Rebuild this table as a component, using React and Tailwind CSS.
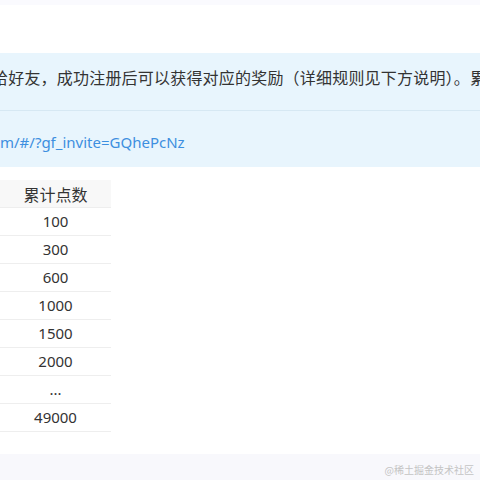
export default function App() {
  const rows = ["100", "300", "600", "1000", "1500", "2000", "...", "49000"];
  return (
    <div
      className="w-[480px] h-[480px] bg-white flex flex-col overflow-hidden text-[#333]"
      style={{ fontFamily: '"Noto Sans", "Noto Sans CJK SC", sans-serif' }}
    >
      <div className="h-[5px] bg-[#fafafe] shrink-0" />
      <div className="h-[48px] shrink-0" />
      <div className="bg-[#e8f5fd] shrink-0">
        <div className="h-[58px] border-b border-[#d6e8f3] pt-[12px] overflow-hidden">
          <p className="whitespace-nowrap -ml-[8px] text-[16px] leading-[24px] tracking-[0.2px] text-[#333]" style={{ fontFamily: '"Noto Sans CJK SC", sans-serif' }}>
            给好友，成功注册后可以获得对应的奖励（详细规则见下方说明）。累计邀请
          </p>
        </div>
        <div className="h-[56px] pt-[19px] overflow-hidden">
          <p className="whitespace-nowrap text-[15px] leading-[24px] text-[#3d8fe0]" style={{ fontFamily: '"Noto Sans", sans-serif' }}>
            m/#/?gf_invite=GQhePcNz
          </p>
        </div>
      </div>
      <div className="h-[13px] shrink-0" />
      <div className="w-[111px] shrink-0 text-[15px]">
        <div className="h-[28px] bg-[#f8f8f8] border-b border-[#eeeeee] flex items-center justify-center text-[16px]" style={{ fontFamily: '"Noto Sans CJK SC", sans-serif' }}>
          累计点数
        </div>
        {rows.map((r) => (
          <div key={r} className="h-[28px] border-b border-[#eeeeee] flex items-center justify-center">
            {r}
          </div>
        ))}
      </div>
      <div className="h-[22px] shrink-0" />
      <div className="flex-1 bg-[#f8f8fc] flex items-end justify-end pr-[6px] pb-[3px]">
        <span className="text-[10px] leading-[14px] text-[#c4c4c4]" style={{ fontFamily: '"Noto Sans CJK SC", serif' }}>
          @稀土掘金技术社区
        </span>
      </div>
    </div>
  );
}
